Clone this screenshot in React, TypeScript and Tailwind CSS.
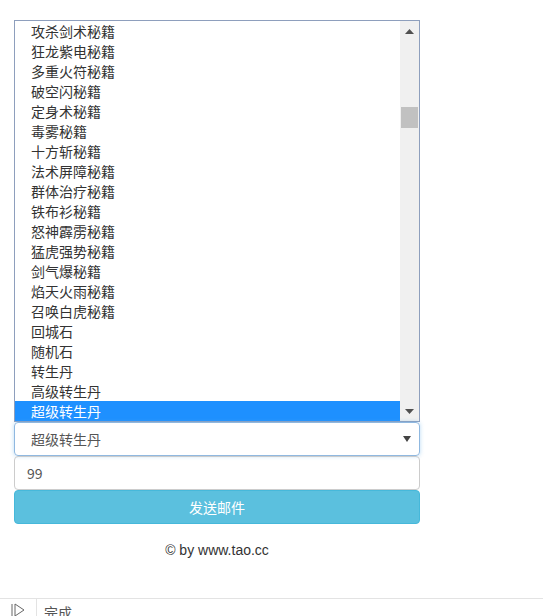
import React from "react";

const items = [
  "攻杀剑术秘籍",
  "狂龙紫电秘籍",
  "多重火符秘籍",
  "破空闪秘籍",
  "定身术秘籍",
  "毒雾秘籍",
  "十方斩秘籍",
  "法术屏障秘籍",
  "群体治疗秘籍",
  "铁布衫秘籍",
  "怒神霹雳秘籍",
  "猛虎强势秘籍",
  "剑气爆秘籍",
  "焰天火雨秘籍",
  "召唤白虎秘籍",
  "回城石",
  "随机石",
  "转生丹",
  "高级转生丹",
  "超级转生丹",
];

export default function App() {
  return (
    <div
      className="relative w-[543px] h-[616px] bg-white overflow-hidden text-[#333]"
      style={{ fontFamily: '"Microsoft YaHei", "Noto Sans CJK SC", "Liberation Sans", sans-serif' }}
    >
      <div className="pt-[20px] pl-[14px] w-[420px] flex flex-col">
        {/* listbox */}
        <div className="h-[402px] border border-[#8e9fbd] flex">
          <div className="flex-1 flex flex-col">
            {items.map((t, i) => (
              <div
                key={t}
                className={
                  "h-[20px] pl-[16px] text-[14px] leading-[20px] " +
                  (i === items.length - 1 ? "bg-[#1e90ff] text-white" : "text-[#333]")
                }
              >
                {t}
              </div>
            ))}
          </div>
          <div className="w-[19px] bg-[#f0f0f0] flex flex-col items-center">
            <div className="h-[20px] flex items-center justify-center">
              <svg width="9" height="5" viewBox="0 0 9 5">
                <polygon points="0,5 9,5 4.5,0" fill="#505050" />
              </svg>
            </div>
            <div className="h-[66px]" />
            <div className="w-[17px] h-[21px] bg-[#c1c1c1]" />
            <div className="flex-1" />
            <div className="h-[20px] flex items-center justify-center">
              <svg width="9" height="5" viewBox="0 0 9 5">
                <polygon points="0,0 9,0 4.5,5" fill="#505050" />
              </svg>
            </div>
          </div>
        </div>
        {/* select */}
        <div className="h-[34px] border border-[#8fb8e0] rounded-[4px] shadow-[0_0_4px_rgba(102,175,233,0.45)] flex items-center pl-[16px] pr-[8px] text-[14px] text-[#555]">
          <span className="flex-1">超级转生丹</span>
          <svg width="8" height="6" viewBox="0 0 8 6">
            <polygon points="0,0 8,0 4,6" fill="#444" />
          </svg>
        </div>
        {/* input */}
        <div className="h-[34px] border border-[#ccc] rounded-[4px] flex items-center pl-[12px] text-[14px] text-[#555]">
          99
        </div>
        {/* button */}
        <div className="h-[34px] bg-[#5bc0de] border border-[#46b8da] rounded-[4px] flex items-center justify-center text-white text-[14px]">
          发送邮件
        </div>
        <div className="mt-[16px] text-center text-[14px] text-[#333]" style={{ fontFamily: '"Liberation Sans", sans-serif' }}>
          © by www.tao.cc
        </div>
      </div>
      {/* status bar */}
      <div className="absolute left-0 right-0 top-[598px] h-[18px] border-t border-[#e3e3e3] bg-white flex items-start">
        <div className="w-[37px] h-full flex items-center pl-[11px] pt-[4px] border-r border-[#e3e3e3]">
          <svg width="14" height="14" viewBox="0 0 14 14">
            <line x1="1" y1="1" x2="1" y2="14" stroke="#666" strokeWidth="1" />
            <polygon points="4,1 13,7 4,13" fill="none" stroke="#666" strokeWidth="1" />
          </svg>
        </div>
        <div className="pl-[7px] pt-[3px] text-[14px] text-[#555] leading-[20px]">完成</div>
      </div>
    </div>
  );
}
